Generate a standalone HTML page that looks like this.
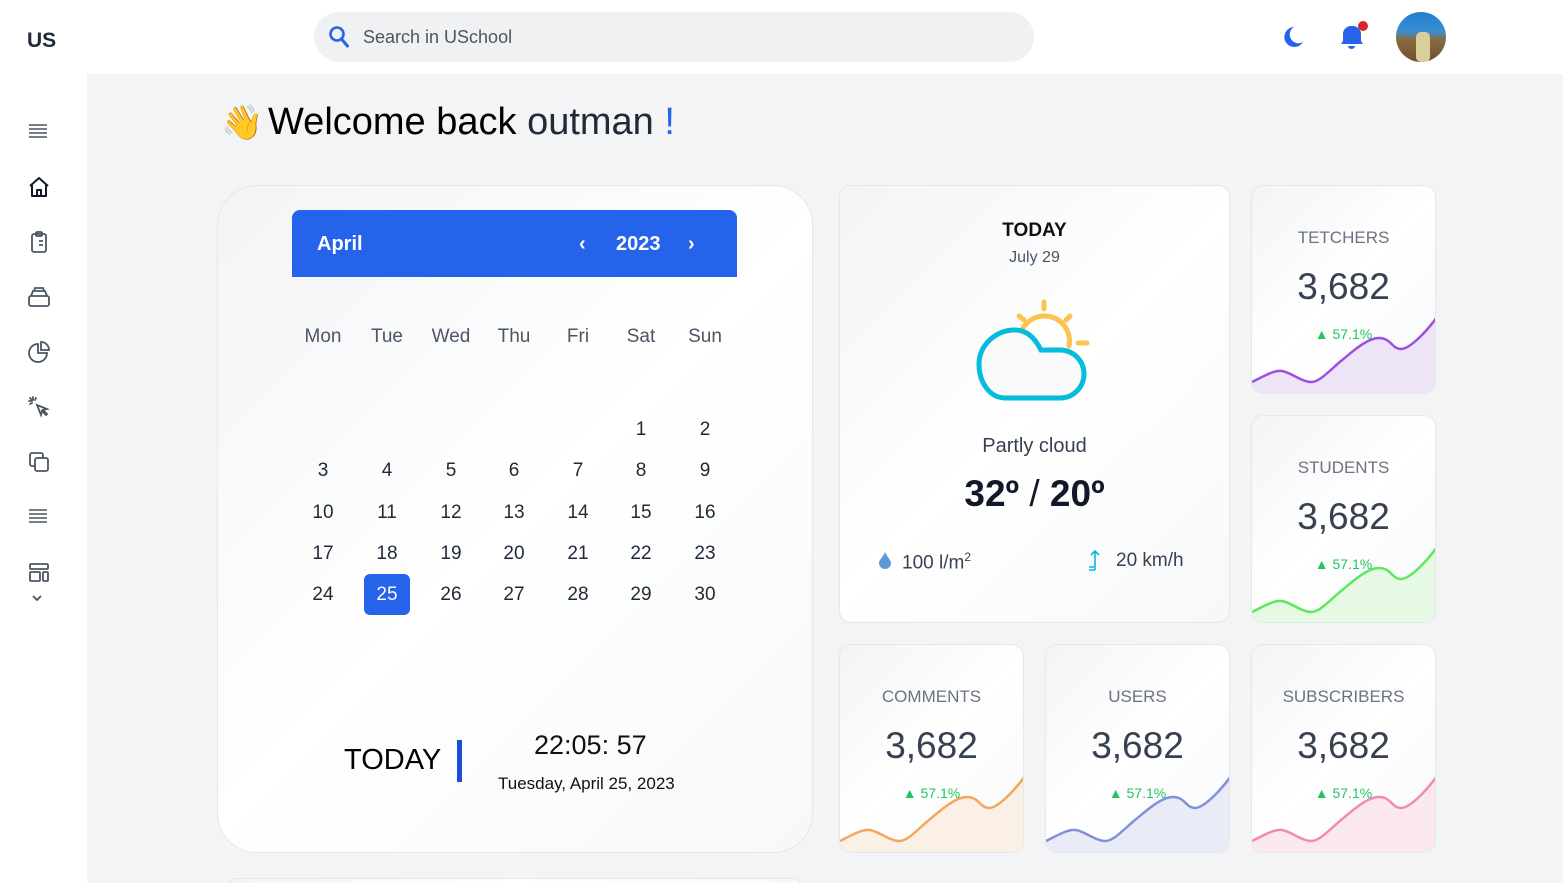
<!DOCTYPE html>
<html><head><meta charset="utf-8">
<style>
*{margin:0;padding:0;box-sizing:border-box}
html{width:1563px;height:883px;overflow:hidden}
body{width:1563px;height:883px;overflow:hidden;background:#f3f4f6;font-family:"Liberation Sans",sans-serif;position:relative;color:#111827}
.a{position:absolute}
.card{position:absolute;background:linear-gradient(135deg,#f3f4f6,#ffffff 50%,#f7f8f9);border:1px solid #e5e7eb;border-radius:12px;overflow:hidden}
.stat .t{position:absolute;top:42px;width:100%;text-align:center;font-size:17px;color:#6b7280}
.stat .n{position:absolute;top:80px;width:100%;text-align:center;font-size:37px;color:#374151}
.stat .p{position:absolute;top:140px;width:100%;text-align:center;font-size:14px;color:#22c55e}
.stat svg{position:absolute;left:0;top:0}
.ic{position:absolute;left:27px}
.d{position:absolute;width:40px;text-align:center;font-size:19px;color:#1f2937}
</style></head><body>
<div class="a" style="left:0;top:0;width:1563px;height:74px;background:#fff"></div>
<div class="a" style="left:0;top:0;width:87px;height:883px;background:#fff"></div>
<div class="a" style="left:27px;top:29px;font-size:21px;font-weight:bold;color:#1f2937">US</div>
<div class="a" style="left:314px;top:12px;width:720px;height:50px;border-radius:25px;background:#f0f1f3"></div>
<svg class="a" style="left:328px;top:25px" width="22" height="24" viewBox="0 0 22 24"><circle cx="9" cy="9" r="6.5" fill="none" stroke="#2563eb" stroke-width="2.6"/><path d="M13.5 14l6 7" stroke="#2563eb" stroke-width="3" stroke-linecap="round"/></svg>
<div class="a" style="left:363px;top:27px;font-size:18px;color:#4b5563">Search in USchool</div>
<svg class="a" style="left:1281px;top:25px" width="24" height="24" viewBox="0 0 24 24"><path d="M13 2A10 10 0 1 0 22 17A8 8 0 0 1 13 2Z" fill="#2563eb"/></svg>
<svg class="a" style="left:1338px;top:20px" width="32" height="32" viewBox="0 0 32 32"><path d="M13 6a8 8 0 0 0-8 8v7l-2 3h22l-2-3v-7a8 8 0 0 0-8-8z" fill="#2563eb"/><path d="M10 26a3.5 3 0 0 0 7 0z" fill="#2563eb"/><circle cx="25" cy="6" r="5" fill="#dc2626"/></svg>
<div class="a" style="left:1396px;top:12px;width:50px;height:50px;border-radius:50%;background:linear-gradient(180deg,#1d7fd0 0%,#3a8ed0 40%,#8b6a3e 55%,#6b5030 100%);overflow:hidden"><div class="a" style="left:20px;top:20px;width:14px;height:30px;background:#d9cf9a;border-radius:5px"></div></div>
<svg class="ic" style="top:122px" width="22" height="18" viewBox="0 0 22 18" stroke="#4b5563" stroke-width="1.6"><path d="M2 3h18M2 7h18M2 11h18M2 15h18"/></svg>
<svg class="ic" style="top:175px" width="24" height="24" viewBox="0 0 24 24" fill="none" stroke="#111827" stroke-width="2" stroke-linejoin="round"><path d="M3 11L12 3l9 8M5 10v11h14V10M10 21v-6h4v6"/></svg>
<svg class="ic" style="top:230px" width="24" height="24" viewBox="0 0 24 24" fill="none" stroke="#4b5563" stroke-width="1.8"><rect x="5" y="4" width="14" height="18" rx="2"/><rect x="9" y="2" width="6" height="4" rx="1"/><path d="M9 11h.01M12 11h4M9 15h.01M12 15h4"/></svg>
<svg class="ic" style="top:285px" width="24" height="24" viewBox="0 0 24 24" fill="none" stroke="#4b5563" stroke-width="1.8"><rect x="2" y="11" width="20" height="10" rx="2"/><path d="M4 11l2-5h12l2 5M7 6l1-3h8l1 3"/></svg>
<svg class="ic" style="top:340px" width="24" height="24" viewBox="0 0 24 24" fill="none" stroke="#4b5563" stroke-width="1.8"><path d="M11 4a9 9 0 1 0 9 9h-9z"/><path d="M14 2a8 8 0 0 1 8 8h-8z"/></svg>
<svg class="ic" style="top:395px" width="24" height="24" viewBox="0 0 24 24" fill="none" stroke="#4b5563" stroke-width="1.8" stroke-linecap="round"><path d="M10 10l10 4-4 1 4 4-1 1-4-4-1 4z"/><path d="M6 2v3M2 6h3M3 3l2 2M9 3l-1 2M3 9l2-1"/></svg>
<svg class="ic" style="top:450px" width="24" height="24" viewBox="0 0 24 24" fill="none" stroke="#4b5563" stroke-width="1.8"><rect x="8" y="8" width="13" height="13" rx="2"/><path d="M16 8V5a2 2 0 0 0-2-2H5a2 2 0 0 0-2 2v9a2 2 0 0 0 2 2h3"/></svg>
<svg class="ic" style="top:507px" width="22" height="18" viewBox="0 0 22 18" stroke="#4b5563" stroke-width="1.6"><path d="M2 3h18M2 7h18M2 11h18M2 15h18"/></svg>
<svg class="ic" style="top:561px" width="24" height="48" viewBox="0 0 24 48" fill="none" stroke="#4b5563" stroke-width="1.8"><rect x="3" y="3" width="18" height="5" rx="1"/><rect x="3" y="11" width="10" height="9" rx="1"/><rect x="16" y="11" width="5" height="9" rx="1"/><path d="M6 35l4 4 4-4"/></svg>
<div class="a" style="left:221px;top:103px;font-size:34px">👋</div>
<div class="a" style="left:268px;top:101px;font-size:38px;color:#000">Welcome back <span style="color:#1f2937">outman</span> <span style="color:#2563eb">!</span></div>
<div class="card" style="left:217px;top:185px;width:596px;height:668px;border-radius:40px"></div>
<div class="a" style="left:292px;top:210px;width:445px;height:67px;background:#2563eb;border-radius:8px 8px 0 0"></div>
<div class="a" style="left:317px;top:233px;font-size:20px;font-weight:bold;color:#fff">April</div>
<div class="a" style="left:579px;top:233px;font-size:20px;font-weight:bold;color:#fff">‹</div>
<div class="a" style="left:616px;top:233px;font-size:20px;font-weight:bold;color:#fff">2023</div>
<div class="a" style="left:688px;top:233px;font-size:20px;font-weight:bold;color:#fff">›</div>
<div class="d" style="left:303px;top:326px;color:#4b5563">Mon</div>
<div class="d" style="left:367px;top:326px;color:#4b5563">Tue</div>
<div class="d" style="left:431px;top:326px;color:#4b5563">Wed</div>
<div class="d" style="left:494px;top:326px;color:#4b5563">Thu</div>
<div class="d" style="left:558px;top:326px;color:#4b5563">Fri</div>
<div class="d" style="left:621px;top:326px;color:#4b5563">Sat</div>
<div class="d" style="left:685px;top:326px;color:#4b5563">Sun</div>
<div class="a" style="left:364px;top:574px;width:46px;height:41px;background:#2563eb;border-radius:6px"></div>
<div class="a" style="left:344px;top:744px;font-size:29px;color:#000">TODAY</div>
<div class="a" style="left:457px;top:740px;width:5px;height:42px;background:#1d4ed8"></div>
<div class="a" style="left:534px;top:730px;font-size:27px;color:#111">22:05: 57</div>
<div class="a" style="left:498px;top:774px;font-size:17px;color:#111">Tuesday, April 25, 2023</div>
<div class="card" style="left:230px;top:878px;width:570px;height:5px;border-radius:20px 20px 0 0;border-bottom:none"></div>
<div class="card" style="left:839px;top:185px;width:391px;height:438px"></div>
<div class="a" style="left:839px;top:220px;width:391px;text-align:center;font-size:19px;font-weight:bold;color:#111">TODAY</div>
<div class="a" style="left:839px;top:249px;width:391px;text-align:center;font-size:16px;color:#4b5563">July 29</div>
<svg class="a" style="left:975px;top:298px" width="116" height="104" viewBox="0 0 116 104" fill="none" stroke-linecap="round">
<g stroke="#fcc44f" stroke-width="5"><path d="M45 38A25 25 0 0 1 94 48"/><path d="M69 4v7M44 18l5 4M95 18l-4 4M103 45h9"/></g>
<path d="M30 100H85A24 24 0 0 0 85 52H66C58 36 48 32 40 32C20 32 4 48 4 66C4 86 16 100 30 100Z" stroke="#06bcdc" stroke-width="5" fill="#fafafa"/></svg>
<div class="a" style="left:839px;top:435px;width:391px;text-align:center;font-size:20px;color:#374151">Partly cloud</div>
<div class="a" style="left:839px;top:473px;width:391px;text-align:center;font-size:37px;font-weight:bold;color:#111827">32º<span style="font-weight:normal"> / </span>20º</div>
<svg class="a" style="left:878px;top:551px" width="14" height="18" viewBox="0 0 14 18"><path d="M7 1C5 6 1 9 1 12a6 6 0 0 0 12 0C13 9 9 6 7 1z" fill="#5b9bd5"/></svg>
<div class="a" style="left:902px;top:550px;font-size:19px;color:#374151">100 l/m<sup style="font-size:12px">2</sup></div>
<svg class="a" style="left:1088px;top:548px" width="14" height="24" viewBox="0 0 14 24" fill="none" stroke="#0ab4e0" stroke-width="1.6"><path d="M7 22V3M3 7l4-4 4 4M1 22h6M1 19h5"/></svg>
<div class="a" style="left:1116px;top:550px;font-size:19px;color:#374151">20 km/h</div>
<div class="card stat" style="left:1251px;top:185px;width:185px;height:209px"><svg width="185" height="209" viewBox="0 0 185 209"><path d="M0 196C12 190 22 184 30 185S50 196 59 196S78 184 89 175S115 152 127 152S140 163 149 163S175 145 185 131V209H0Z" fill="#ede4f8"/><path d="M0 196C12 190 22 184 30 185S50 196 59 196S78 184 89 175S115 152 127 152S140 163 149 163S175 145 185 131" fill="none" stroke="#9b51e0" stroke-width="2.5"/></svg><div class="t">TETCHERS</div><div class="n">3,682</div><div class="p">▲ 57.1%</div></div>
<div class="card stat" style="left:1251px;top:415px;width:185px;height:208px"><svg width="185" height="209" viewBox="0 0 185 209"><path d="M0 196C12 190 22 184 30 185S50 196 59 196S78 184 89 175S115 152 127 152S140 163 149 163S175 145 185 131V209H0Z" fill="#e5f9e5"/><path d="M0 196C12 190 22 184 30 185S50 196 59 196S78 184 89 175S115 152 127 152S140 163 149 163S175 145 185 131" fill="none" stroke="#5ee85a" stroke-width="2.5"/></svg><div class="t">STUDENTS</div><div class="n">3,682</div><div class="p">▲ 57.1%</div></div>
<div class="card stat" style="left:839px;top:644px;width:185px;height:209px"><svg width="185" height="209" viewBox="0 0 185 209"><path d="M0 196C12 190 22 184 30 185S50 196 59 196S78 184 89 175S115 152 127 152S140 163 149 163S175 145 185 131V209H0Z" fill="#faf0e5"/><path d="M0 196C12 190 22 184 30 185S50 196 59 196S78 184 89 175S115 152 127 152S140 163 149 163S175 145 185 131" fill="none" stroke="#f4a65a" stroke-width="2.5"/></svg><div class="t">COMMENTS</div><div class="n">3,682</div><div class="p">▲ 57.1%</div></div>
<div class="card stat" style="left:1045px;top:644px;width:185px;height:209px"><svg width="185" height="209" viewBox="0 0 185 209"><path d="M0 196C12 190 22 184 30 185S50 196 59 196S78 184 89 175S115 152 127 152S140 163 149 163S175 145 185 131V209H0Z" fill="#e9ebf6"/><path d="M0 196C12 190 22 184 30 185S50 196 59 196S78 184 89 175S115 152 127 152S140 163 149 163S175 145 185 131" fill="none" stroke="#8190dc" stroke-width="2.5"/></svg><div class="t">USERS</div><div class="n">3,682</div><div class="p">▲ 57.1%</div></div>
<div class="card stat" style="left:1251px;top:644px;width:185px;height:209px"><svg width="185" height="209" viewBox="0 0 185 209"><path d="M0 196C12 190 22 184 30 185S50 196 59 196S78 184 89 175S115 152 127 152S140 163 149 163S175 145 185 131V209H0Z" fill="#fbe8ef"/><path d="M0 196C12 190 22 184 30 185S50 196 59 196S78 184 89 175S115 152 127 152S140 163 149 163S175 145 185 131" fill="none" stroke="#f28bb0" stroke-width="2.5"/></svg><div class="t">SUBSCRIBERS</div><div class="n">3,682</div><div class="p">▲ 57.1%</div></div>
<div class="d" style="left:621px;top:419px">1</div><div class="d" style="left:685px;top:419px">2</div>
<div class="d" style="left:303px;top:460px">3</div><div class="d" style="left:367px;top:460px">4</div><div class="d" style="left:431px;top:460px">5</div><div class="d" style="left:494px;top:460px">6</div><div class="d" style="left:558px;top:460px">7</div><div class="d" style="left:621px;top:460px">8</div><div class="d" style="left:685px;top:460px">9</div>
<div class="d" style="left:303px;top:502px">10</div><div class="d" style="left:367px;top:502px">11</div><div class="d" style="left:431px;top:502px">12</div><div class="d" style="left:494px;top:502px">13</div><div class="d" style="left:558px;top:502px">14</div><div class="d" style="left:621px;top:502px">15</div><div class="d" style="left:685px;top:502px">16</div>
<div class="d" style="left:303px;top:543px">17</div><div class="d" style="left:367px;top:543px">18</div><div class="d" style="left:431px;top:543px">19</div><div class="d" style="left:494px;top:543px">20</div><div class="d" style="left:558px;top:543px">21</div><div class="d" style="left:621px;top:543px">22</div><div class="d" style="left:685px;top:543px">23</div>
<div class="d" style="left:303px;top:584px">24</div><div class="d" style="left:367px;top:584px;color:#fff">25</div><div class="d" style="left:431px;top:584px">26</div><div class="d" style="left:494px;top:584px">27</div><div class="d" style="left:558px;top:584px">28</div><div class="d" style="left:621px;top:584px">29</div><div class="d" style="left:685px;top:584px">30</div>
</body></html>
